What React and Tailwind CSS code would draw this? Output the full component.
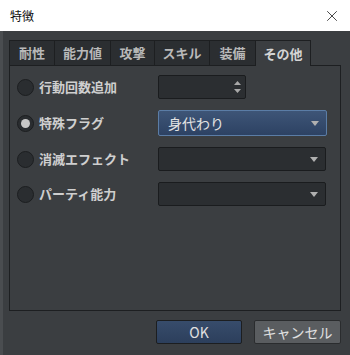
import { X } from "lucide-react";

const tabs = [
  ["耐性", "w-[45px]"],
  ["能力値", "w-[56px]"],
  ["攻撃", "w-[44px]"],
  ["スキル", "w-[55px]"],
  ["装備", "w-[46px]"],
];

function Radio({ checked }) {
  return (
    <span className="flex h-[17px] w-[17px] items-center justify-center rounded-full border border-[#1c1e20] bg-[#2a2d30]">
      {checked && <span className="h-[9px] w-[9px] rounded-full bg-[#c8c8c8]" />}
    </span>
  );
}

function Caret() {
  return (
    <svg width="8" height="5" viewBox="0 0 8 5">
      <path d="M0 0h8L4 5z" fill="#b0b0b0" />
    </svg>
  );
}

function Select({ value, active }) {
  return (
    <div
      className={
        active
          ? "flex h-[26px] w-[169px] items-center justify-between rounded-[2px] border border-[#5b7da6] bg-gradient-to-b from-[#3e5577] to-[#2d4263] pl-[9px] pr-[7px] text-[14px] text-[#e2e2e2]"
          : "flex h-[24px] w-[168px] items-center justify-between rounded-[2px] border border-[#1a1c1e] bg-[#2b2e31] pl-[9px] pr-[7px]"
      }
    >
      <span>{value}</span>
      <Caret />
    </div>
  );
}

function Row({ label, checked, children }) {
  return (
    <div className="flex items-center">
      <div className="flex w-[141px] items-center gap-[5px]">
        <Radio checked={checked} />
        <span className="text-[13px] font-bold text-[#cfcfcf]">{label}</span>
      </div>
      {children}
    </div>
  );
}

export default function App() {
  return (
    <div
      className="flex h-[355px] w-[350px] flex-col bg-[#3b3e41]"
      style={{ fontFamily: '"Noto Sans CJK JP", "Noto Sans", sans-serif' }}
    >
      <div className="flex h-[31px] items-center justify-between bg-white pl-[10px] pr-[9px]">
        <span className="text-[12px] text-[#111]">特徴</span>
        <X size={18} strokeWidth={1.1} color="#222" />
      </div>
      <div className="flex flex-1 flex-col border-l-[3px] border-[#4a4d50] pl-[6px] pr-[9px] pt-[9px]">
        <div className="flex h-[25px] items-end">
          {tabs.map(([t, w]) => (
            <div
              key={t}
              className={`flex h-[25px] ${w} items-center justify-center border border-b-0 border-r-0 border-[#1d1f21] bg-[#2b2e31] text-[13px] font-bold text-[#b9b9b9]`}
            >
              {t}
            </div>
          ))}
          <div className="relative -mb-px flex h-[26px] w-[56px] items-center justify-center border border-b-0 border-[#1d1f21] bg-[#3b3e41] text-[13px] font-bold text-[#d4d4d4]">
            その他
          </div>
        </div>
        <div className="flex h-[246px] flex-col gap-[11px] border border-[#1d1f21] bg-[#3b3e41] pl-[7px] pt-[9px]">
          <Row label="行動回数追加">
            <div className="flex h-[24px] w-[88px] items-center justify-end rounded-[2px] border border-[#1a1c1e] bg-[#2b2e31] pr-[4px]">
              <div className="flex flex-col gap-[4px]">
                <svg width="7" height="4" viewBox="0 0 7 4">
                  <path d="M0 4h7L3.5 0z" fill="#a8a8a8" />
                </svg>
                <svg width="7" height="4" viewBox="0 0 7 4">
                  <path d="M0 0h7L3.5 4z" fill="#a8a8a8" />
                </svg>
              </div>
            </div>
          </Row>
          <Row label="特殊フラグ" checked>
            <Select value="身代わり" active />
          </Row>
          <Row label="消滅エフェクト">
            <Select value="" />
          </Row>
          <Row label="パーティ能力">
            <Select value="" />
          </Row>
        </div>
        <div className="flex justify-end gap-[12px] pt-[9px]">
          <button className="h-[24px] w-[86px] rounded-[2px] border border-[#1c1e20] bg-gradient-to-b from-[#374c6b] to-[#2c3f5c] text-[14px] text-[#e0e0e0]">
            OK
          </button>
          <button className="h-[24px] w-[87px] rounded-[2px] border border-[#2a2c2e] bg-[#5a5d60] text-[14px] text-[#e0e0e0]">
            キャンセル
          </button>
        </div>
      </div>
    </div>
  );
}
